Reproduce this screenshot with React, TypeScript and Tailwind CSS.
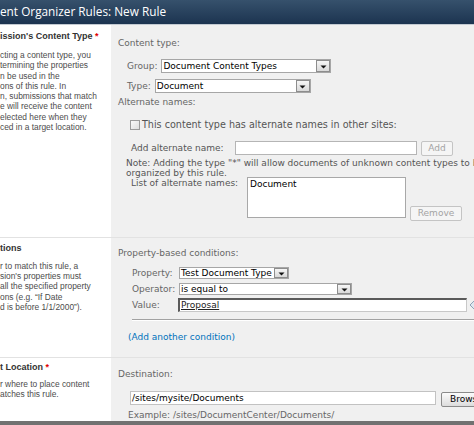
import React from "react";

const ArrowButton = () => (
  <div className="flex h-full w-[14px] shrink-0 items-center justify-center border border-[#8d8d8d] bg-linear-to-b from-[#f6f6f6] to-[#d9d9d9]">
    <svg width="7" height="5" viewBox="0 0 7 5">
      <path d="M0.5 1.5 L6.5 1.5 L3.5 4.5 Z" fill="#111" />
    </svg>
  </div>
);

type SelectProps = {
  value: string;
  width: string;
  height: string;
};

const FakeSelect = ({ value, width, height }: SelectProps) => (
  <div
    className={`flex ${width} ${height} items-stretch border border-[#a6a6a6] bg-white`}
  >
    <div className="flex flex-1 items-center overflow-hidden whitespace-nowrap pl-[1px] text-black">
      {value}
    </div>
    <ArrowButton />
  </div>
);

const LeftText = ({
  heading,
  required,
  lines,
  pt,
  mt,
}: {
  heading: string;
  required?: boolean;
  lines: string[];
  pt: string;
  mt: string;
}) => (
  <div
    className={`w-[111px] shrink-0 overflow-hidden bg-white ${pt} font-['Liberation_Sans',Arial,sans-serif] whitespace-nowrap`}
  >
    <div className="text-[9px] leading-[10.4px] font-bold text-[#333]">
      {heading}
      {required && <span className="text-[#e00000]"> *</span>}
    </div>
    <div className={`${mt} text-[8.4px] leading-[10.3px] text-[#4c4c4c]`}>
      {lines.map((l, i) => (
        <div key={i}>{l}</div>
      ))}
    </div>
  </div>
);

const DisabledButton = ({ label, width }: { label: string; width: string }) => (
  <div
    className={`flex ${width} h-[15px] items-center justify-center rounded-[2px] border border-[#c4c4c4] bg-[#f5f5f5] text-[#a3a3a3]`}
  >
    {label}
  </div>
);

export default function App() {
  return (
    <div className="flex h-[425px] w-[474px] flex-col overflow-hidden bg-white font-['DejaVu_Sans',Verdana,sans-serif] text-[9px] leading-[11px] text-[#666]">
      {/* title */}
      <div className="flex h-[25px] shrink-0 items-center border-b border-[#c3cad2] bg-linear-to-b from-[#36516c] to-[#1c3450] pb-[1px] font-['Open_Sans',sans-serif] text-[11.8px] whitespace-nowrap text-white">
        ent Organizer Rules: New Rule
      </div>

      {/* content type */}
      <div className="flex h-[213px] shrink-0 border-b border-[#e2e2e2]">
        <LeftText
          heading="ission's Content Type"
          required
          pt="pt-[6px]"
          mt="mt-[8.6px]"
          lines={[
            "cting a content type, you",
            "termining the properties",
            "n be used in the",
            "ons of this rule. In",
            "n, submissions that match",
            "e will receive the content",
            "elected here when they",
            "ced in a target location.",
          ]}
        />
        <div className="flex flex-1 flex-col bg-[#f0f0f0] pl-[7px] whitespace-nowrap">
          <div className="mt-[13px]">Content type:</div>
          <div className="mt-[10px] flex h-[14px] items-center gap-[4px] pl-[9px]">
            <span>Group:</span>
            <FakeSelect
              value="Document Content Types"
              width="w-[170px]"
              height="h-[14px]"
            />
          </div>
          <div className="mt-[6px] flex h-[14px] items-center gap-[4px] pl-[9px]">
            <span>Type:</span>
            <FakeSelect value="Document" width="w-[156px]" height="h-[14px]" />
          </div>
          <div className="mt-[4px]">Alternate names:</div>
          <div className="mt-[11px] flex h-[11px] items-center gap-[2px] pl-[12px] text-[#555]">
            <div className="h-[10px] w-[10px] shrink-0 border border-[#9b9b9b] bg-linear-to-br from-[#fafafa] to-[#dedede]" />
            <span className="text-[9.6px]">
              This content type has alternate names in other sites:
            </span>
          </div>
          <div className="mt-[11px] flex items-start pl-[13px] text-[#555]">
            <span className="w-[104px] leading-[14px]">Add alternate name:</span>
            <div className="h-[14px] w-[182px] border border-[#b5b5b5] bg-white" />
            <div className="ml-[4px]">
              <DisabledButton label="Add" width="w-[32px]" />
            </div>
          </div>
          <div className="mt-[2px] pl-[8px] leading-[10px] text-[#555]">
            <div>
              Note: Adding the type "*" will allow documents of unknown content
              types to be
            </div>
            <div>organized by this rule.</div>
          </div>
          <div className="-mt-[1px] flex items-start pl-[13px] text-[#555]">
            <span className="w-[116px] pt-[1px]">List of alternate names:</span>
            <div className="h-[41px] w-[159px] border border-[#a8a8a8] bg-white pl-[2px] pt-[1px] text-black">
              Document
            </div>
            <div className="ml-[4px] mt-[29px]">
              <DisabledButton label="Remove" width="w-[52px]" />
            </div>
          </div>
        </div>
      </div>

      {/* conditions */}
      <div className="flex h-[120px] shrink-0 border-b border-[#e2e2e2]">
        <LeftText
          heading="tions"
          pt="pt-[4.8px]"
          mt="mt-[7.6px]"
          lines={[
            "r to match this rule, a",
            "sion's properties must",
            "all the specified property",
            "ons (e.g. \u201cIf Date",
            "d is before 1/1/2000\u201d).",
          ]}
        />
        <div className="flex flex-1 flex-col bg-[#f0f0f0] pl-[7px] whitespace-nowrap">
          <div className="mt-[10px]">Property-based conditions:</div>
          <div className="mt-[8px] flex h-[12px] items-center pl-[14px]">
            <span className="w-[47px]">Property:</span>
            <FakeSelect
              value="Test Document Type"
              width="w-[110px]"
              height="h-[12px]"
            />
          </div>
          <div className="mt-[4px] flex h-[12px] items-center pl-[14px]">
            <span className="w-[47px]">Operator:</span>
            <FakeSelect value="is equal to" width="w-[173px]" height="h-[12px]" />
          </div>
          <div className="mt-[3px] flex h-[14px] items-center pl-[14px]">
            <span className="w-[46px]">Value:</span>
            <div className="flex h-[14px] w-[289px] shrink-0 items-center border-t-2 border-l-2 border-r border-b border-t-[#5a5a5a] border-l-[#5a5a5a] border-r-[#c8c8c8] border-b-[#c8c8c8] bg-white pl-[1px] text-[#222]">
              <span className="underline">Proposal</span>
            </div>
            <svg
              className="ml-[2px] shrink-0"
              width="12"
              height="10"
              viewBox="0 0 12 10"
            >
              <path
                d="M1 5 L5 1 L11 1 L11 9 L5 9 Z"
                fill="#dfe7ef"
                stroke="#8ea3b8"
                strokeWidth="1"
              />
            </svg>
          </div>
          <div className="mt-[7px] ml-[14px] h-[2px] shrink-0 border-t border-b border-t-[#a2a2a2] border-b-white" />
          <div className="mt-[10.5px] ml-[10px] text-[#0072bc]">
            (Add another condition)
          </div>
        </div>
      </div>

      {/* target location */}
      <div className="flex flex-1">
        <LeftText
          heading="t Location"
          required
          pt="pt-[3.8px]"
          mt="mt-[6.6px]"
          lines={["r where to place content", "atches this rule."]}
        />
        <div className="flex flex-1 flex-col bg-[#f0f0f0] pl-[7px] whitespace-nowrap">
          <div className="mt-[10.5px]">Destination:</div>
          <div className="mt-[11.5px] ml-[12px] flex items-start">
            <div className="flex h-[14px] w-[306px] shrink-0 items-center border border-[#c2c2c2] bg-white pl-[1px] text-black">
              /sites/mysite/Documents
            </div>
            <div className="mt-[1px] ml-[5px] flex h-[15px] w-[60px] shrink-0 items-center rounded-[2px] border border-[#8a8a8a] bg-linear-to-b from-[#fbfbfb] to-[#dcdcdc] pl-[8px] text-black">
              Browse...
            </div>
          </div>
          <div className="mt-[2.5px] ml-[10px]">
            Example: /sites/DocumentCenter/Documents/
          </div>
        </div>
      </div>
      <div className="h-[4px] shrink-0 bg-[#717171]" />
    </div>
  );
}
